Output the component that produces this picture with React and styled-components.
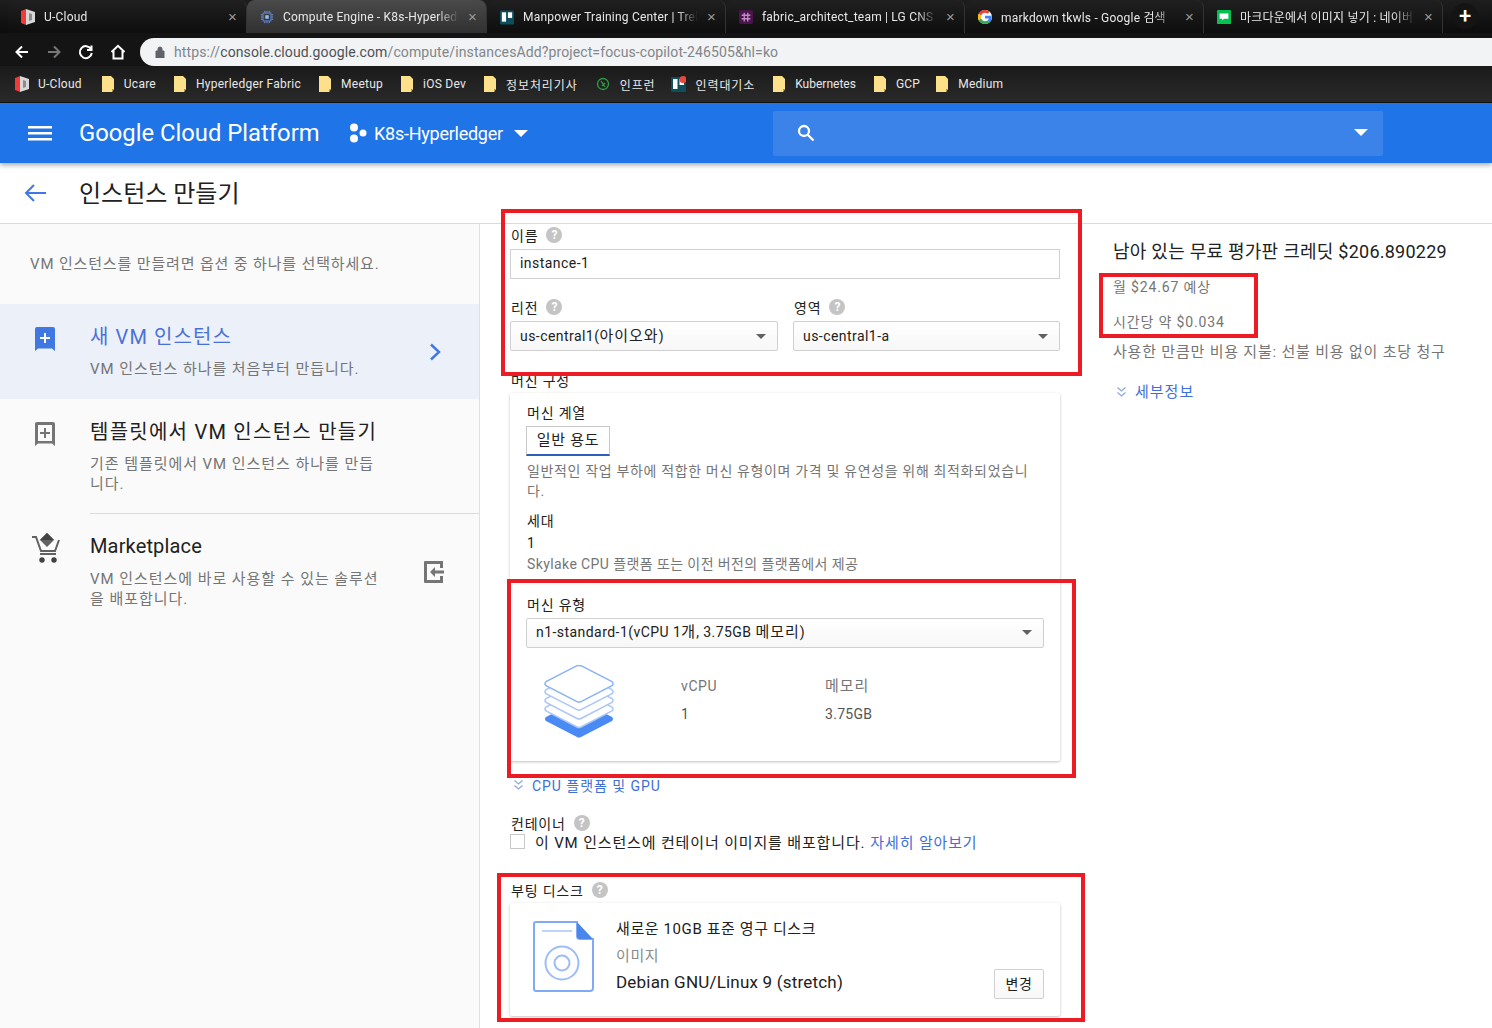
import React from 'react';
import styled, { createGlobalStyle } from 'styled-components';

const FONT = `Roboto, "Noto Sans CJK KR", sans-serif`;

const Global = createGlobalStyle`
  html, body { margin: 0; padding: 0; background: #fff; }
  body { font-family: ${FONT}; color: #202124; overflow: hidden; }
  * { box-sizing: border-box; }
`;

const Page = styled.div`
  position: relative;
  width: 1492px;
  height: 1028px;
  overflow: hidden;
  display: flex;
  flex-direction: column;
`;

/* hangul runs are set a little wider than the latin around them */
const Ko = styled.span`
  font-size: 15px;
  line-height: 1;
  letter-spacing: 1px;
`;

/* browser chrome */
const TabStrip = styled.div`
  height: 33px;
  flex: none;
  background: linear-gradient(#1e1e1e, #0c0c0c);
  display: flex;
  align-items: flex-end;
  padding-left: 8px;
`;

const Tab = styled.div`
  width: ${(p) => p.$w}px;
  height: 33px;
  display: flex;
  align-items: center;
  padding: 0 9px 0 13px;
  gap: 9px;
  border-radius: 8px 8px 0 0;
  background: ${(p) => (p.$active ? 'linear-gradient(#4a4a4a, #303030)' : 'linear-gradient(#202020, #0e0e0e)')};
  color: #e8e8e8;
  font-size: 12px;
  letter-spacing: 0.2px;
  border-right: 1px solid #333;
`;

const TabIcon = styled.span`
  width: 14px;
  flex: none;
  display: flex;
  justify-content: center;
`;

const TabTitle = styled.span`
  flex: 1;
  white-space: nowrap;
  overflow: hidden;
  -webkit-mask-image: linear-gradient(90deg, #000 88%, transparent);
  mask-image: linear-gradient(90deg, #000 88%, transparent);
`;

const TabClose = styled.span`
  color: #9a9a9a;
  font-size: 15px;
  line-height: 1;
  font-family: "Liberation Sans", sans-serif;
`;

const NewTab = styled.div`
  width: 26px;
  height: 26px;
  margin: 0 0 4px 9px;
  border-radius: 50%;
  background: #141414;
  color: #fff;
  font-size: 22px;
  font-weight: 500;
  line-height: 25px;
  text-align: center;
`;

const Toolbar = styled.div`
  height: 33px;
  flex: none;
  background: #141414;
  display: flex;
  align-items: flex-end;
  padding-left: 14px;
  gap: 16px;
`;

const NavIcon = styled.svg`
  width: 16px;
  height: 16px;
  margin-bottom: 6px;
  flex: none;
  fill: none;
  stroke: ${(p) => p.$c || '#fff'};
  stroke-width: 2;
`;

const Omnibox = styled.div`
  flex: 1;
  height: 28px;
  margin-left: -2px;
  background: #f1f3f4;
  border-radius: 14px 0 0 14px;
  display: flex;
  align-items: center;
  padding-left: 15px;
  gap: 9px;
  font-size: 14px;
  letter-spacing: 0.11px;
  color: #80868b;
`;

const UrlDark = styled.span`
  color: #4d5156;
`;

const Bookmarks = styled.div`
  height: 37px;
  flex: none;
  background: linear-gradient(#1a1a1a, #2a2a2a);
  border-bottom: 1px solid #111;
  display: flex;
  align-items: center;
  padding-left: 15px;
  color: #e8e8e8;
  font-size: 12px;
`;

const Bookmark = styled.div`
  display: flex;
  align-items: center;
  gap: ${(p) => p.$gap || 10}px;
  margin-right: ${(p) => p.$mr || 18}px;
  letter-spacing: ${(p) => p.$ls || '0.25px'};
  white-space: nowrap;
`;

/* GCP top bar */
const TopBar = styled.header`
  height: 60px;
  flex: none;
  background: #1f74e8;
  box-shadow: 0 2px 5px rgba(0, 0, 0, 0.35);
  display: flex;
  align-items: center;
  position: relative;
  z-index: 2;
  color: #fff;
`;

const Burger = styled.svg`
  width: 24px;
  height: 24px;
  margin-left: 28px;
  fill: #fff;
`;

const Brand = styled.div`
  margin-left: 27px;
  font-size: 23.8px;
  width: 269px;
  white-space: nowrap;
`;

const Project = styled.div`
  display: flex;
  align-items: center;
  font-size: 18px;
  letter-spacing: -0.25px;
  width: 425px;
`;

const ProjectName = styled.span`
  margin: 0 11px 0 6px;
`;

const Search = styled.div`
  width: 610px;
  height: 45px;
  margin-top: 1px;
  background: #3b82e9;
  border-radius: 2px;
  display: flex;
  align-items: center;
  justify-content: space-between;
  padding: 0 15px 2px 24px;
`;

const Caret = styled.span`
  display: inline-block;
  flex: none;
  width: 0;
  height: 0;
  border-left: ${(p) => p.$s || 5}px solid transparent;
  border-right: ${(p) => p.$s || 5}px solid transparent;
  border-top: ${(p) => p.$s || 5}px solid ${(p) => p.$c || '#fff'};
`;

const TitleBar = styled.div`
  height: 61px;
  flex: none;
  display: flex;
  align-items: center;
  border-bottom: 1px solid #dadada;
  padding-left: 24px;
`;

const PageTitle = styled.h1`
  margin: 0 0 3px 32px;
  font-size: 24px;
  font-weight: 400;
  color: #212121;
`;

const Body = styled.div`
  flex: 1;
  display: flex;
  min-height: 0;
`;

/* left column */
const Side = styled.aside`
  width: 480px;
  flex: none;
  background: #fafafa;
  border-right: 1px solid #e0e0e0;
`;

const SideIntro = styled.p`
  margin: 0;
  height: 80px;
  padding: 30px 30px 0;
  font-size: 15px;
  line-height: 20px;
  letter-spacing: 0.85px;
  color: #757575;
`;

const Option = styled.div`
  display: flex;
  height: ${(p) => p.$h}px;
  background: ${(p) => (p.$active ? '#ecf0f9' : 'transparent')};
`;

const OptionIcon = styled.div`
  width: 90px;
  flex: none;
  padding: ${(p) => p.$top || 23}px 0 0 ${(p) => p.$left || 35}px;
`;

const OptionBody = styled.div`
  flex: 1;
  padding-top: ${(p) => (p.$line ? 19 : 20)}px;
  padding-right: 100px;
  position: relative;
  ${(p) => p.$line && 'border-top: 1px solid #dcdcdc;'}
`;

const OptionTitle = styled.div`
  font-size: 20px;
  line-height: 26px;
  letter-spacing: ${(p) => p.$ls || '1.25px'};
  color: ${(p) => (p.$active ? '#4a72d6' : '#212121')};
  white-space: nowrap;
`;

const OptionText = styled.div`
  margin-top: ${(p) => p.$mt || 9}px;
  font-size: 15px;
  line-height: 20px;
  letter-spacing: 0.95px;
  color: #757575;
`;

const OptionAction = styled.div`
  position: absolute;
  right: ${(p) => p.$r}px;
  top: ${(p) => p.$t}px;
`;

/* form column */
const Main = styled.main`
  width: 633px;
  flex: none;
  padding: 1px 53px 0 30px;
`;

const FieldLabel = styled.div`
  display: flex;
  align-items: center;
  gap: 8px;
  height: 20px;
  margin-top: ${(p) => p.$mt || 0}px;
  padding-left: 1px;
  font-size: 14px;
  letter-spacing: 0.8px;
  color: #212121;
`;

const Help = styled.span`
  width: 16px;
  height: 16px;
  border-radius: 50%;
  background: #c4c4c4;
  color: #fff;
  font-size: 12px;
  font-weight: 700;
  line-height: 16px;
  text-align: center;
  letter-spacing: 0;
`;

const TextInput = styled.div`
  height: 30px;
  margin-top: 4px;
  border: 1px solid #d0d0d0;
  padding-left: 9px;
  font-size: 14px;
  line-height: 26px;
  letter-spacing: 0.45px;
  color: #212121;
  background: #fff;
`;

const SelectBox = styled.div`
  height: 30px;
  margin-top: ${(p) => p.$mt || 4}px;
  border: 1px solid #d0d0d0;
  border-radius: 2px;
  background: linear-gradient(#fff, #f7f7f7);
  display: flex;
  align-items: center;
  justify-content: space-between;
  padding: 0 11px ${(p) => p.$pb || 0}px 9px;
  font-size: 14px;
  letter-spacing: 0.45px;
  color: #212121;
`;

const TwoCols = styled.div`
  display: grid;
  grid-template-columns: 268px 267px;
  gap: 15px;
`;

const Card = styled.section`
  margin-top: ${(p) => p.$mt || 0}px;
  height: ${(p) => p.$h}px;
  background: #fff;
  border-radius: 2px;
  box-shadow: 0 1px 3px rgba(0, 0, 0, 0.25);
`;

const MachineCard = styled(Card)`
  padding: 10px 16px 0;
`;

const SmallLabel = styled.div`
  padding-left: 1px;
  font-size: 14px;
  line-height: 20px;
  letter-spacing: 0.8px;
  color: #212121;
  margin-top: ${(p) => p.$mt || 0}px;
`;

const FamilyTab = styled.div`
  width: 84px;
  height: 30px;
  margin-top: 3px;
  border: 1px solid #c8c8c8;
  border-bottom: 2px solid #2f5fb8;
  font-size: 15px;
  letter-spacing: 0.7px;
  line-height: 27px;
  text-align: center;
  color: #212121;
`;

const Muted = styled.div`
  margin-top: ${(p) => p.$mt || 0}px;
  padding: 0 14px 0 1px;
  font-size: 14px;
  line-height: 20px;
  letter-spacing: ${(p) => p.$ls || '0.65px'};
  color: #757575;
`;

const Specs = styled.div`
  display: flex;
  margin-top: 17px;
`;

const SpecIcon = styled.div`
  width: 155px;
  padding-left: 18px;
`;

const SpecCol = styled.div`
  width: 144px;
  padding-top: 11px;
  font-size: 14px;
  color: #757575;
`;

const SpecValue = styled.div`
  margin-top: 8px;
  line-height: 20px;
  letter-spacing: 0.3px;
  color: #555;
`;

const SpecName = styled.div`
  line-height: 20px;
  letter-spacing: 0.6px;
`;

const LinkRow = styled.div`
  display: flex;
  align-items: center;
  gap: 8px;
  margin-top: ${(p) => p.$mt || 0}px;
  padding-left: 3px;
  height: 20px;
  font-size: 14px;
  letter-spacing: 0.95px;
  color: #3f6fd8;
`;

const CheckRow = styled.div`
  display: flex;
  align-items: center;
  height: 18px;
  margin-top: -1px;
  font-size: 15px;
  letter-spacing: 0.85px;
  color: #212121;
  white-space: nowrap;
`;

const Box = styled.span`
  width: 15px;
  height: 15px;
  flex: none;
  border: 1px solid #c8c8c8;
  background: #fff;
  margin-right: 10px;
`;

const A = styled.span`
  color: #3f6fd8;
  margin-left: 5px;
`;

const DiskCard = styled(Card)`
  display: flex;
  position: relative;
  padding: 18px 0 0 23px;
  margin-top: 3px;
`;

const DiskInfo = styled.div`
  margin: -2px 0 0 22px;
`;

const DiskName = styled.div`
  font-size: 15px;
  line-height: 20px;
  letter-spacing: 0.6px;
  color: #212121;
`;

const DiskKind = styled.div`
  margin-top: 7px;
  font-size: 15px;
  line-height: 20px;
  letter-spacing: 0.6px;
  color: #8a8a8a;
`;

const DiskImage = styled.div`
  margin-top: 6px;
  font-size: 17px;
  line-height: 20px;
  letter-spacing: 0.2px;
  color: #212121;
`;

const Change = styled.div`
  position: absolute;
  right: 16px;
  bottom: 17px;
  width: 50px;
  height: 30px;
  border: 1px solid #d0d0d0;
  border-radius: 2px;
  background: linear-gradient(#fff, #f8f8f8);
  font-size: 14px;
  letter-spacing: 0.5px;
  line-height: 28px;
  text-align: center;
  color: #212121;
`;

/* right column */
const Pricing = styled.div`
  flex: 1;
  padding-top: 16px;
`;

const Credit = styled.div`
  font-size: 18px;
  line-height: 24px;
  color: #212121;
  letter-spacing: 0.25px;
  white-space: nowrap;
`;

const PriceLine = styled.div`
  margin-top: ${(p) => p.$mt}px;
  font-size: ${(p) => (p.$wide ? 15 : 14)}px;
  line-height: 20px;
  letter-spacing: ${(p) => (p.$wide ? 0.8 : 0.85)}px;
  color: #757575;
  white-space: nowrap;
`;

const Annotation = styled.div`
  position: absolute;
  left: ${(p) => p.$x}px;
  top: ${(p) => p.$y}px;
  width: ${(p) => p.$w}px;
  height: ${(p) => p.$h}px;
  border: 4px solid #ed1c24;
  z-index: 5;
  pointer-events: none;
`;

/* small drawings */
const Folder = () => (
  <svg width="12" height="16" viewBox="0 0 12 16">
    <path d="M0 0h9l3 3v10l-2 3H0z" fill="#fde08a" />
    <path d="M12 13h-2v3z" fill="#b89a45" />
  </svg>
);

const UCloud = () => (
  <svg width="14" height="16" viewBox="0 0 14 16">
    <path d="M0 2l5-2v16l-5-2z" fill="#ee3b3b" />
    <path d="M5 0l9 3v10l-9 3z" fill="#d8d8d8" />
    <path d="M8 4l3 1v6l-3 1z" fill="#8d8d8d" />
  </svg>
);

const Trello = ({ dot }) => (
  <svg width="15" height="16" viewBox="0 0 15 16">
    <rect width="15" height="15" y="1" rx="1" fill="#0f4f5c" />
    <rect x="2" y="3" width="4.5" height="10" fill="#fff" />
    <rect x="8.5" y="3" width="4.5" height="6" fill="#fff" />
    {dot && <circle cx="12" cy="3.5" r="3.5" fill="#e8473f" />}
  </svg>
);

const Chip = () => (
  <svg width="16" height="16" viewBox="0 0 16 16" fill="none" stroke="#7fa8f0">
    <rect x="3.5" y="3.5" width="9" height="9" stroke="#5a8df0" />
    <rect x="6" y="6" width="4" height="4" fill="#9bbcf5" stroke="none" />
    <path d="M5.5 1v2M8 1v2M10.5 1v2M5.5 13v2M8 13v2M10.5 13v2M1 5.5h2M1 8h2M1 10.5h2M13 5.5h2M13 8h2M13 10.5h2" />
  </svg>
);

const Slack = () => (
  <svg width="16" height="16" viewBox="0 0 16 16">
    <rect width="16" height="16" rx="2" fill="#4a154b" />
    <path d="M6 3v10M10 3v10M3 6h10M3 10h10" stroke="#c08ac4" strokeWidth="1.6" />
  </svg>
);

const GoogleG = () => (
  <svg width="16" height="16" viewBox="0 0 48 48">
    <circle cx="24" cy="24" r="24" fill="#fff" />
    <path fill="#ea4335" d="M24 9.500c3.500 0 6.700 1.300 9.100 3.400l6.800-6.800C35.800 2.400 30.300 0 24 0 14.600 0 6.500 5.400 2.600 13.200l7.900 6.100C12.400 13.700 17.700 9.500 24 9.500z" />
    <path fill="#4285f4" d="M47 24.500c0-1.600-.1-3.100-.4-4.500H24v9h13c-.6 3-2.300 5.500-4.800 7.200l7.700 6c4.500-4.200 7.100-10.300 7.100-17.700z" />
    <path fill="#fbbc05" d="M10.500 28.700A14.500 14.500 0 0 1 10.500 19.300L2.600 13.200a24 24 0 0 0 0 21.600z" />
    <path fill="#34a853" d="M24 48c6.500 0 11.900-2.100 15.900-5.800l-7.700-6c-2.200 1.400-4.900 2.300-8.200 2.300-6.300 0-11.600-4.200-13.500-9.800l-7.900 6.100C6.500 42.600 14.600 48 24 48z" />
  </svg>
);

const LineIcon = () => (
  <svg width="16" height="16" viewBox="0 0 16 16">
    <rect width="16" height="16" rx="1" fill="#06c152" />
    <path d="M3 4h10v6H8l-2 2v-2H3z" fill="#fff" />
  </svg>
);

const Inflearn = () => (
  <svg width="14" height="14" viewBox="0 0 14 14" fill="none" stroke="#2f9e44" strokeWidth="1.300">
    <circle cx="7" cy="7" r="5.500" />
    <path d="M5 4l4 6M9 6l-3 3" />
  </svg>
);

const AddIcon = ({ active }) => (
  <svg width="20" height="24" viewBox="0 0 20 24">
    <path
      d="M2 0h16a2 2 0 0 1 2 2v22l-3-2.500H3l-3 2.500V2a2 2 0 0 1 2-2z"
      fill={active ? '#3f78e0' : '#757575'}
    />
    {!active && <rect x="3" y="3" width="14" height="16" fill="#fafafa" />}
    <path d="M9 6h2v4h4v2h-4v4H9v-4H5v-2h4z" fill={active ? '#fff' : '#757575'} />
  </svg>
);

const CartIcon = () => (
  <svg width="30" height="30" viewBox="0 0 30 30">
    <path d="M1 4h4l5 14h14l4-11" fill="none" stroke="#616161" strokeWidth="2" />
    <path d="M16 0l7 7-7 7-7-7z" fill="#616161" />
    <path d="M16 0l7 7h-14z" fill="#424242" />
    <path d="M9 20h16v2H9z" fill="#616161" />
    <circle cx="11" cy="27" r="2.700" fill="#424242" />
    <circle cx="23" cy="27" r="2.700" fill="#424242" />
  </svg>
);

const ExitIcon = () => (
  <svg width="21" height="24" viewBox="0 0 21 24">
    <path d="M2 1h18v7h-3V4H4v16h13v-4h3v7H2a1 1 0 0 1-1-1V2a1 1 0 0 1 1-1z" fill="#757575" />
    <path d="M21 10.500v3h-9v3.500l-5-5 5-5v3.500z" fill="#757575" />
  </svg>
);

const Chevrons = () => (
  <svg width="11" height="12" viewBox="0 0 11 12" fill="none" stroke="#8fa9e8" strokeWidth="1.300">
    <path d="M1.500 1.500l4 3.500 4-3.500M1.500 6.500l4 3.500 4-3.500" />
  </svg>
);

const layerPath = (y) =>
  `M33 ${y} Q35 ${y - 0.5} 37 ${y} L68 ${y + 16} Q70 ${y + 18} 68 ${y + 20} L37 ${y + 36} Q35 ${y + 37} 33 ${y + 36} L2 ${y + 20} Q0 ${y + 18} 2 ${y + 16} Z`;

const StackIcon = () => (
  <svg width="70" height="74" viewBox="0 0 70 74">
    <path d={layerPath(36)} fill="#4a8af4" />
    {[26, 17.5, 8.7].map((y) => (
      <path key={y} d={layerPath(y)} fill="#fff" stroke="#a9c6fa" strokeWidth="1.5" />
    ))}
    <path d={layerPath(0.7)} fill="#fff" stroke="#8ab2f8" strokeWidth="1.5" />
  </svg>
);

const DiskIcon = () => (
  <svg width="61" height="71" viewBox="0 0 61 71">
    <path d="M3 1h41v14a3 3 0 0 0 3 3h13v49a3 3 0 0 1-3 3H3a2 2 0 0 1-2-2V3a2 2 0 0 1 2-2z" fill="#fff" stroke="#7fabf6" strokeWidth="2" />
    <path d="M9 10h30" stroke="#a9c6fa" strokeWidth="1.500" />
    <path d="M44 1l16 17H47a3 3 0 0 1-3-3z" fill="#4a86ec" />
    <circle cx="29" cy="42" r="16.500" fill="none" stroke="#9cbdf8" strokeWidth="2" />
    <circle cx="29" cy="42" r="7.500" fill="none" stroke="#9cbdf8" strokeWidth="2" />
  </svg>
);

const TABS = [
  { w: 239, icon: <UCloud />, title: 'U-Cloud' },
  { w: 240, icon: <Chip />, title: 'Compute Engine - K8s-Hyperledger', active: true },
  { w: 239, icon: <Trello />, title: 'Manpower Training Center | Trello' },
  { w: 239, icon: <Slack />, title: 'fabric_architect_team | LG CNS Slack' },
  { w: 239, icon: <GoogleG />, title: 'markdown tkwls - Google 검색' },
  { w: 239, icon: <LineIcon />, title: '마크다운에서 이미지 넣기 : 네이버' },
];

const KO_LS = '0.9px';

const MARKS = [
  { icon: <UCloud />, name: 'U-Cloud', gap: 9, mr: 20 },
  { icon: <Folder />, name: 'Ucare' },
  { icon: <Folder />, name: 'Hyperledger Fabric' },
  { icon: <Folder />, name: 'Meetup' },
  { icon: <Folder />, name: 'iOS Dev' },
  { icon: <Folder />, name: '정보처리기사', ls: KO_LS },
  { icon: <Inflearn />, name: '인프런', ls: KO_LS, mr: 15 },
  { icon: <Trello dot />, name: '인력대기소', ls: KO_LS },
  { icon: <Folder />, name: 'Kubernetes', ls: '0' },
  { icon: <Folder />, name: 'GCP', mr: 16 },
  { icon: <Folder />, name: 'Medium' },
];

export default function App() {
  return (
    <Page>
      <Global />
      <TabStrip>
        {TABS.map((t) => (
          <Tab key={t.title} $w={t.w} $active={t.active}>
            <TabIcon>{t.icon}</TabIcon>
            <TabTitle>{t.title}</TabTitle>
            <TabClose>×</TabClose>
          </Tab>
        ))}
        <NewTab>+</NewTab>
      </TabStrip>

      <Toolbar>
        <NavIcon viewBox="0 0 16 16"><path d="M14 8H3M8 2.500L2.500 8 8 13.500" /></NavIcon>
        <NavIcon viewBox="0 0 16 16" $c="#777"><path d="M2 8h11M8 2.500L13.500 8 8 13.500" /></NavIcon>
        <NavIcon viewBox="0 0 16 16"><path d="M13 5a6 6 0 1 0 .8 4M13.500 1.500V6H9" /></NavIcon>
        <NavIcon viewBox="0 0 16 16"><path d="M1.500 8L8 1.800 14.500 8M3.500 7v7.500h9V7" /></NavIcon>
        <Omnibox>
          <svg width="10" height="12" viewBox="0 0 10 12">
            <path d="M1 5h8v7H1zM3 5V3a2 2 0 0 1 4 0v2" fill="#5f6368" stroke="#5f6368" />
          </svg>
          <span>
            https://<UrlDark>console.cloud.google.com</UrlDark>/compute/instancesAdd?project=focus-copilot-246505&hl=ko
          </span>
        </Omnibox>
      </Toolbar>

      <Bookmarks>
        {MARKS.map((m) => (
          <Bookmark key={m.name} $gap={m.gap} $mr={m.mr} $ls={m.ls}>
            {m.icon}
            <span>{m.name}</span>
          </Bookmark>
        ))}
      </Bookmarks>

      <TopBar>
        <Burger viewBox="0 0 24 24"><path d="M0 5h24v2.500H0zM0 11h24v2.500H0zM0 17h24v2.500H0z" /></Burger>
        <Brand>Google Cloud Platform</Brand>
        <Project>
          <svg width="20" height="20" viewBox="0 0 20 20" fill="#fff">
            <circle cx="6" cy="4.500" r="4" />
            <circle cx="15" cy="10" r="3.500" />
            <circle cx="6" cy="15.500" r="4" />
          </svg>
          <ProjectName>K8s-Hyperledger</ProjectName>
          <Caret $s={7} />
        </Project>
        <Search>
          <svg width="18" height="18" viewBox="0 0 18 18" fill="none" stroke="#fff" strokeWidth="2.300">
            <circle cx="7" cy="7" r="5" />
            <path d="M10.500 10.500L16.500 16.500" />
          </svg>
          <Caret $s={7} />
        </Search>
      </TopBar>

      <TitleBar>
        <svg width="23" height="20" viewBox="0 0 23 20" fill="none" stroke="#3f78e0" strokeWidth="2">
          <path d="M22 10H2M10 2l-8 8 8 8" />
        </svg>
        <PageTitle>인스턴스 만들기</PageTitle>
      </TitleBar>

      <Body>
        <Side>
          <SideIntro>VM 인스턴스를 만들려면 옵션 중 하나를 선택하세요.</SideIntro>
          <Option $active $h={95}>
            <OptionIcon><AddIcon active /></OptionIcon>
            <OptionBody>
              <OptionTitle $active $ls="1.1px">새 VM 인스턴스</OptionTitle>
              <OptionText>VM 인스턴스 하나를 처음부터 만듭니다.</OptionText>
              <OptionAction $r={38} $t={39}>
                <svg width="12" height="18" viewBox="0 0 12 18" fill="none" stroke="#3f78e0" strokeWidth="2.400">
                  <path d="M2 1.500L10 9l-8 7.500" />
                </svg>
              </OptionAction>
            </OptionBody>
          </Option>
          <Option $h={114}>
            <OptionIcon><AddIcon /></OptionIcon>
            <OptionBody>
              <OptionTitle>템플릿에서 VM 인스턴스 만들기</OptionTitle>
              <OptionText>기존 템플릿에서 VM 인스턴스 하나를 만듭니다.</OptionText>
            </OptionBody>
          </Option>
          <Option $h={110}>
            <OptionIcon $top={20} $left={31}><CartIcon /></OptionIcon>
            <OptionBody $line>
              <OptionTitle $ls="0.15px">Marketplace</OptionTitle>
              <OptionText $mt={10}>VM 인스턴스에 바로 사용할 수 있는 솔루션을 배포합니다.</OptionText>
              <OptionAction $r={35} $t={46}><ExitIcon /></OptionAction>
            </OptionBody>
          </Option>
        </Side>

        <Main>
          <FieldLabel>이름<Help>?</Help></FieldLabel>
          <TextInput>instance-1</TextInput>
          <TwoCols>
            <div>
              <FieldLabel $mt={18}>리전<Help>?</Help></FieldLabel>
              <SelectBox>
                <span>us-central1(<Ko>아이오와</Ko>)</span>
                <Caret $c="#616161" />
              </SelectBox>
            </div>
            <div>
              <FieldLabel $mt={18}>영역<Help>?</Help></FieldLabel>
              <SelectBox>us-central1-a<Caret $c="#616161" /></SelectBox>
            </div>
          </TwoCols>
          <FieldLabel $mt={19}>머신 구성</FieldLabel>
          <MachineCard $mt={3} $h={368}>
            <SmallLabel>머신 계열</SmallLabel>
            <FamilyTab>일반 용도</FamilyTab>
            <Muted $mt={5}>일반적인 작업 부하에 적합한 머신 유형이며 가격 및 유연성을 위해 최적화되었습니다.</Muted>
            <SmallLabel $mt={10}>세대</SmallLabel>
            <SmallLabel $mt={2}>1</SmallLabel>
            <Muted $mt={1} $ls="0.4px">Skylake CPU 플랫폼 또는 이전 버전의 플랫폼에서 제공</Muted>
            <SmallLabel $mt={21}>머신 유형</SmallLabel>
            <SelectBox $mt={3} $pb={2}>
              <span>n1-standard-1(vCPU 1<Ko>개</Ko>, 3.75GB <Ko>메모리</Ko>)</span>
              <Caret $c="#616161" />
            </SelectBox>
            <Specs>
              <SpecIcon><StackIcon /></SpecIcon>
              <SpecCol>
                <SpecName>vCPU</SpecName>
                <SpecValue>1</SpecValue>
              </SpecCol>
              <SpecCol>
                <SpecName><Ko>메모리</Ko></SpecName>
                <SpecValue>3.75GB</SpecValue>
              </SpecCol>
            </Specs>
          </MachineCard>
          <LinkRow $mt={14}><Chevrons />CPU 플랫폼 및 GPU</LinkRow>
          <FieldLabel $mt={18}>컨테이너<Help>?</Help></FieldLabel>
          <CheckRow>
            <Box />이 VM 인스턴스에 컨테이너 이미지를 배포합니다.<A>자세히 알아보기</A>
          </CheckRow>
          <FieldLabel $mt={30}>부팅 디스크<Help>?</Help></FieldLabel>
          <DiskCard $h={113}>
            <DiskIcon />
            <DiskInfo>
              <DiskName>새로운 10GB 표준 영구 디스크</DiskName>
              <DiskKind>이미지</DiskKind>
              <DiskImage>Debian GNU/Linux 9 (stretch)</DiskImage>
            </DiskInfo>
            <Change>변경</Change>
          </DiskCard>
        </Main>

        <Pricing>
          <Credit>남아 있는 무료 평가판 크레딧 $206.890229</Credit>
          <PriceLine $mt={13}>월 $24.67 예상</PriceLine>
          <PriceLine $mt={15}>시간당 약 $0.034</PriceLine>
          <PriceLine $mt={10} $wide>사용한 만큼만 비용 지불: 선불 비용 없이 초당 청구</PriceLine>
          <LinkRow $mt={20}><Chevrons /><Ko>세부정보</Ko></LinkRow>
        </Pricing>
      </Body>

      <Annotation $x={501} $y={209} $w={581} $h={167} />
      <Annotation $x={507} $y={579} $w={569} $h={199} />
      <Annotation $x={497} $y={873} $w={588} $h={149} />
      <Annotation $x={1099} $y={273} $w={159} $h={65} />
    </Page>
  );
}
